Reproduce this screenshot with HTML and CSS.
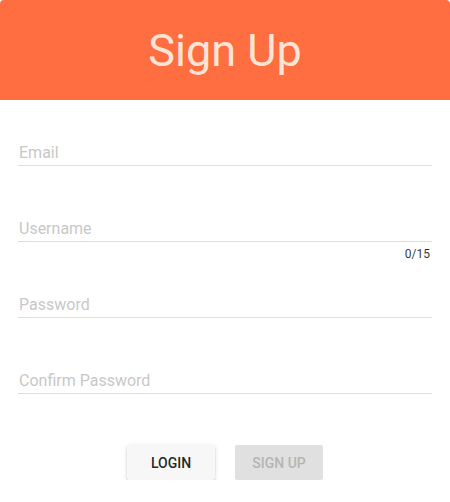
FILE: index.html
```html
<!DOCTYPE html>
<html lang="en">
<head>
<meta charset="utf-8">
<title>Sign Up</title>
<link rel="stylesheet" href="styles.css">
</head>
<body>
<div class="card">
  <header class="card-header">
    <h1 class="title">Sign Up</h1>
  </header>
  <form class="form">
    <div class="group">
      <div class="field"><input class="input" type="email" placeholder="Email"></div>
      <div class="details"></div>
    </div>
    <div class="group">
      <div class="field"><input class="input" type="text" placeholder="Username"></div>
      <div class="details"><span class="counter">0/15</span></div>
    </div>
    <div class="group">
      <div class="field"><input class="input" type="password" placeholder="Password"></div>
      <div class="details"></div>
    </div>
    <div class="group">
      <div class="field"><input class="input" type="password" placeholder="Confirm Password"></div>
      <div class="details"></div>
    </div>
    <div class="actions">
      <button type="button" class="btn btn-raised">Login</button>
      <button type="button" class="btn btn-disabled" disabled>Sign Up</button>
    </div>
  </form>
</div>
</body>
</html>
```

FILE: styles.css
```css
* { box-sizing: border-box; }
html, body { margin: 0; padding: 0; background: #ffffff; }
body { font-family: Roboto, "Noto Sans", Arial, sans-serif; }

.card {
  width: 450px;
  background: #ffffff;
  border-radius: 4px 4px 0 0;
  overflow: hidden;
}

.card-header {
  height: 100px;
  background: #ff6e40;
  display: flex;
  align-items: center;
  justify-content: center;
}

.title {
  margin: 0;
  font-size: 45px;
  font-weight: 400;
  line-height: 48px;
  color: #ffe4d6;
  letter-spacing: 0;
  padding-top: 2px;
}

.form {
  padding: 34px 18px 0 18px;
  display: flex;
  flex-direction: column;
}

.field {
  height: 32px;
  padding-bottom: 2px;
  border-bottom: 1px solid #dedede;
  display: flex;
  align-items: flex-end;
}

.input {
  width: 100%;
  border: 0;
  outline: 0;
  padding: 0 0 0 1px;
  margin: 0;
  background: transparent;
  font-family: Roboto, "Noto Sans", Arial, sans-serif;
  font-size: 16px;
  line-height: 20px;
  height: 20px;
  color: rgba(0,0,0,.87);
}
.input::placeholder { color: #c8c8c8; opacity: 1; }

.details {
  height: 44px;
  display: flex;
  justify-content: flex-end;
  align-items: flex-start;
  padding-top: 6px;
}

.counter {
  font-size: 12px;
  line-height: 12px;
  color: rgba(0,0,0,.82);
  padding-right: 2px;
}

.actions {
  display: flex;
  justify-content: center;
  gap: 20px;
  padding-top: 7px;
}

.btn {
  min-width: 88px;
  height: 35px;
  padding: 0 16px;
  border: 0;
  border-radius: 2px;
  font-family: Roboto, "Noto Sans", Arial, sans-serif;
  font-size: 14px;
  font-weight: 500;
  text-transform: uppercase;
  letter-spacing: 0;
}

.btn-raised {
  background: #f7f7f7;
  color: rgba(0,0,0,.87);
  box-shadow: 0 3px 1px -2px rgba(0,0,0,.2), 0 2px 2px 0 rgba(0,0,0,.14), 0 1px 5px 0 rgba(0,0,0,.12);
}

.btn-disabled {
  background: #e0e0e0;
  color: #b5b5b5;
}
```
